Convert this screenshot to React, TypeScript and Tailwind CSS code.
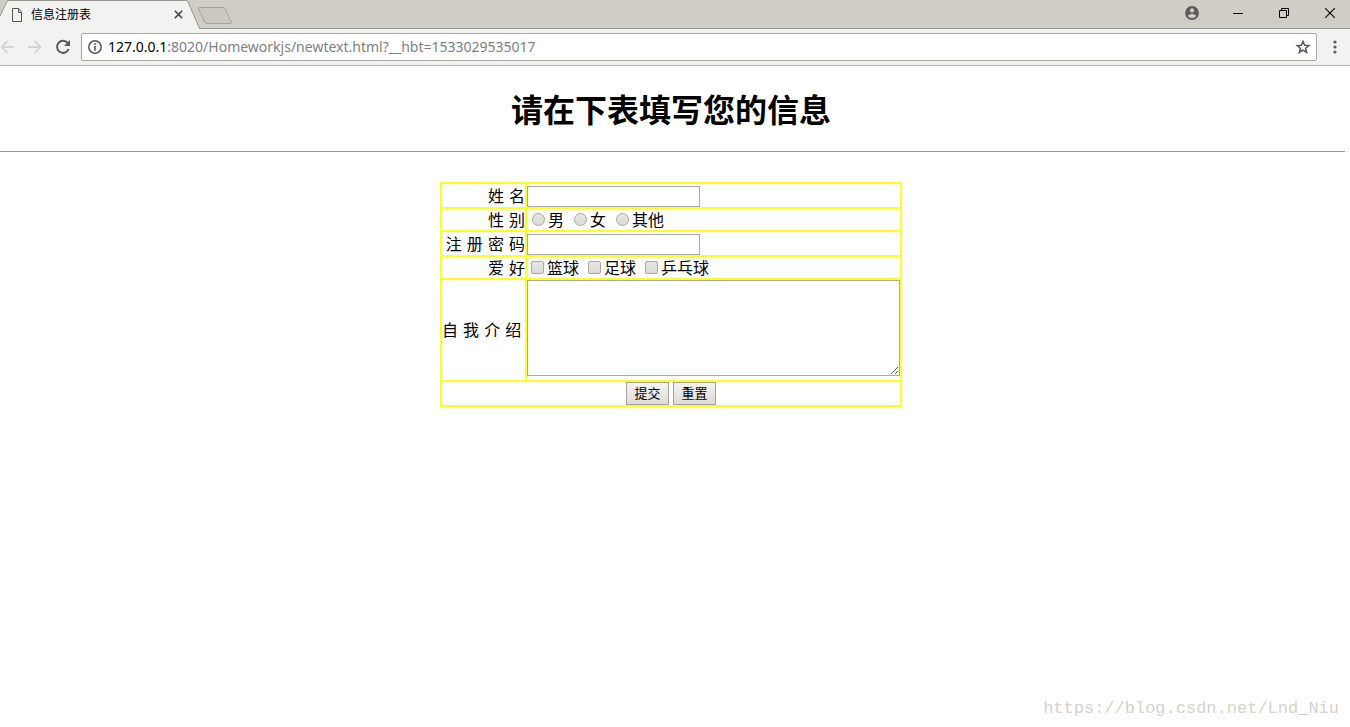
import { useState } from "react";
import type { ReactNode } from "react";

function TabStrip() {
  return (
    <header className="flex h-[29px] items-stretch border-b border-[#9b9993] bg-[#d0cdc6]">
      <div className="relative flex h-[29px] w-[200px] shrink-0 items-center">
        <svg className="absolute inset-0" width="200" height="29" viewBox="0 0 200 29" aria-hidden="true">
          <path d="M0 17 7.5 .5H187L199.5 29H0Z" fill="#f2f2f0" />
          <path d="M0 16 7.5 .5H186Q187.500 .5 188 2L199.500 28.500" fill="none" stroke="#9b9993" />
        </svg>
        <svg className="relative ml-3 shrink-0" width="11" height="14" viewBox="0 0 11 14" fill="none" stroke="#555" aria-hidden="true">
          <path d="M.5 .5H6.5L9.5 4V13.5H.5ZM6.5 .5V4.5H9.5" />
        </svg>
        <span className="relative ml-2 flex-1 text-xs leading-4 text-black">信息注册表</span>
        <button type="button" aria-label="关闭标签页" className="relative mr-4 grid h-4 w-3 place-items-center">
          <svg width="9" height="9" viewBox="0 0 9 9" stroke="#444" strokeWidth="1.6">
            <path d="M.8 .8 8.2 8.2M8.2 .8.8 8.2" />
          </svg>
        </button>
      </div>
      <button type="button" aria-label="新建标签页" className="-ml-1 pt-[2px]">
        <svg width="38" height="20" viewBox="0 0 38 20" fill="#cbc8c2" stroke="#a5a29d">
          <path d="M3.500 2.500H27Q28.500 2.500 29.200 4L35.300 17Q36 18.500 34.500 18.500H11Q9.500 18.500 8.800 17L2.600 4Q2 2.500 3.500 2.500Z" />
        </svg>
      </button>
      <div className="ml-auto flex items-start">
        <button type="button" aria-label="用户" className="grid h-[26px] w-[46px] place-items-center">
          <svg width="14" height="14" viewBox="0 0 14 14">
            <circle cx="7" cy="7" r="6.900" fill="#5d5b58" />
            <circle cx="7" cy="4.400" r="2.100" fill="#d0cdc6" />
            <path d="M2.900 9.900C3.700 8.400 5.600 7.900 7 7.900S10.300 8.400 11.100 9.900C10.200 11.200 8.700 12 7 12S3.800 11.200 2.900 9.900Z" fill="#d0cdc6" />
          </svg>
        </button>
        <button type="button" aria-label="最小化" className="grid h-[26px] w-[46px] place-items-center">
          <svg width="10" height="10" viewBox="0 0 10 10" stroke="#000">
            <path d="M0 5.500H10" />
          </svg>
        </button>
        <button type="button" aria-label="还原" className="grid h-[26px] w-[46px] place-items-center">
          <svg width="10" height="10" viewBox="0 0 10 10" fill="none" stroke="#000">
            <path d="M.5 2.500H7.500V9.500H.5ZM2.500 2.500V.5H9.500V7.500H7.500" />
          </svg>
        </button>
        <button type="button" aria-label="关闭" className="grid h-[26px] w-[43px] place-items-center pl-[3px]">
          <svg width="10" height="10" viewBox="0 0 10 10" stroke="#000" strokeWidth="1.100">
            <path d="M0 0 10 10M10 0 0 10" />
          </svg>
        </button>
      </div>
    </header>
  );
}

function Toolbar() {
  return (
    <nav className="flex h-[37px] items-center border-b border-[#b6b4b0] bg-[#f2f2f0]">
      <button type="button" aria-label="后退" className="grid h-7 w-7 place-items-center pr-[14px]">
        <svg width="14" height="14" viewBox="0 0 14 14" fill="none" stroke="#d5d4d2" strokeWidth="1.800">
          <path d="M14 7H1.500M7.500 1 1.500 7 7.500 13" />
        </svg>
      </button>
      <button type="button" aria-label="前进" className="grid h-7 w-[14px] place-items-center">
        <svg width="14" height="14" viewBox="0 0 14 14" fill="none" stroke="#d5d4d2" strokeWidth="1.800">
          <path d="M0 7H12.500M6.500 1 12.500 7 6.500 13" />
        </svg>
      </button>
      <button type="button" aria-label="重新加载" className="ml-[13px] grid h-7 w-4 place-items-center">
        <svg width="16" height="16" viewBox="0 0 16 16">
          <path d="M12.700 4A6 6 0 1 0 13.700 10" fill="none" stroke="#5a5a5a" strokeWidth="2" />
          <path d="M15 1V7H9Z" fill="#5a5a5a" />
        </svg>
      </button>
      <div className="ml-[10px] flex h-7 flex-1 items-center rounded-xs border border-[#aaa8a5] bg-white pr-[5px] pl-[6px]">
        <svg className="shrink-0" width="14" height="14" viewBox="0 0 14 14" aria-hidden="true">
          <circle cx="7" cy="7" r="6.200" fill="none" stroke="#555" strokeWidth="1.500" />
          <path d="M6.200 3.300H7.800V4.900H6.200ZM6.200 6H7.800V10.700H6.200Z" fill="#555" />
        </svg>
        <a
          href="#page"
          className="ml-[6px] flex-1 font-['Noto_Sans'] text-sm leading-5 text-[#808080]"
        >
          <span className="text-black">127.0.0.1</span>:8020/Homeworkjs/newtext.html?__hbt=1533029535017
        </a>
        <button type="button" aria-label="收藏" className="grid h-5 w-4 place-items-center">
          <svg width="16" height="16" viewBox="0 0 16 16" fill="none" stroke="#555" strokeWidth="1.500">
            <path d="M8 2.400 9.600 6.300 13.800 6.600 10.600 9.300 11.600 13.400 8 11.200 4.400 13.400 5.400 9.300 2.200 6.600 6.400 6.300Z" />
          </svg>
        </button>
      </div>
      <button type="button" aria-label="菜单" className="grid h-7 w-[33px] place-items-center pl-[3px]">
        <svg width="4" height="14" viewBox="0 0 4 14" fill="#5a5a5a">
          <circle cx="2" cy="2" r="1.600" />
          <circle cx="2" cy="7" r="1.600" />
          <circle cx="2" cy="12" r="1.600" />
        </svg>
      </button>
    </nav>
  );
}

const cell = "border-2 border-[#ffff1e] p-0";
const heading = "border-2 border-[#ffff1e] p-0 pt-[2px] w-[85px] text-right leading-[19px] font-normal";
const field = "mt-[2px] block h-[21px] w-[173px] border border-[#a9a9a9] bg-white px-[2px] text-[13px] outline-none";

function Choice({ type, name, label }: { type: "radio" | "checkbox"; name: string; label: string }) {
  const shape =
    type === "radio"
      ? "ml-[5px] rounded-full checked:shadow-[inset_0_0_0_3px_#e2e0dd] checked:bg-[#444]"
      : "ml-1 rounded-xs checked:bg-[#666]";
  return (
    <label className="mr-[5px] flex items-center">
      <input
        type={type}
        name={name}
        className={`${shape} mr-[3px] mb-[2px] size-[13px] appearance-none border border-[#aaa8a4] bg-linear-to-b from-[#e8e6e3] to-[#dcdad7] checked:bg-none`}
      />
      {label}
    </label>
  );
}

function Field({ id, type, label }: { id: string; type: "text" | "password"; label: string }) {
  return (
    <tr>
      <th scope="row" className={heading}>
        <label htmlFor={id}>{label}</label>
      </th>
      <td className={cell}>
        <input id={id} type={type} className={field} />
      </td>
    </tr>
  );
}

function Choices({ label, children }: { label: string; children: ReactNode }) {
  return (
    <tr>
      <th scope="row" className={heading}>{label}</th>
      <td className={cell}>
        <div className="flex pt-[2px] leading-[19px]">{children}</div>
      </td>
    </tr>
  );
}

function FormButton({ type, children }: { type: "submit" | "reset"; children: ReactNode }) {
  return (
    <button
      type={type}
      className="h-[23px] w-[43px] border border-[#a3a19e] bg-linear-to-b from-[#f5f4f2] to-[#dddbd8] text-[13px] leading-5"
    >
      {children}
    </button>
  );
}

export default function App() {
  const [intro, setIntro] = useState("");

  return (
    <div className="flex min-h-screen flex-col bg-white font-['DejaVu_Sans','Noto_Sans_CJK_SC',sans-serif] text-black">
      <TabStrip />
      <Toolbar />
      <main id="page">
        <h1 className="pt-[23px] pr-2 text-center text-[32px] leading-[44px] font-bold">请在下表填写您的信息</h1>
        <hr className="mt-[18px] mr-[5px] border-t border-[#95938f]" />
        <form className="pt-[30px] pr-2" onSubmit={(e) => e.preventDefault()} onReset={() => setIntro("")}>
          <table className="mx-auto w-[462px] border-collapse text-base leading-[21px]">
            <tbody>
              <Field id="name" type="text" label="姓 名" />
              <Choices label="性 别">
                <Choice type="radio" name="sex" label="男" />
                <Choice type="radio" name="sex" label="女" />
                <Choice type="radio" name="sex" label="其他" />
              </Choices>
              <Field id="password" type="password" label="注 册 密 码" />
              <Choices label="爱 好">
                <Choice type="checkbox" name="basketball" label="篮球" />
                <Choice type="checkbox" name="football" label="足球" />
                <Choice type="checkbox" name="pingpong" label="乒乓球" />
              </Choices>
              <tr>
                <th scope="row" className={`${cell} text-left font-normal`}>
                  <label htmlFor="intro">自 我 介 绍</label>
                </th>
                <td className={cell}>
                  <textarea
                    id="intro"
                    value={intro}
                    onChange={(e) => setIntro(e.target.value)}
                    className="mb-1 block h-24 w-full border border-[#a9a9a9] p-[2px] text-[13px] outline-none"
                  />
                </td>
              </tr>
              <tr>
                <td colSpan={2} className={cell}>
                  <div className="flex justify-center gap-1">
                    <FormButton type="submit">提交</FormButton>
                    <FormButton type="reset">重置</FormButton>
                  </div>
                </td>
              </tr>
            </tbody>
          </table>
        </form>
      </main>
      <footer className="mt-auto pr-[11px] pb-[6px] text-right font-['Liberation_Mono',monospace] text-[17px] leading-6 text-[#d3d3cc]">
        https://blog.csdn.net/Lnd_Niu
      </footer>
    </div>
  );
}
